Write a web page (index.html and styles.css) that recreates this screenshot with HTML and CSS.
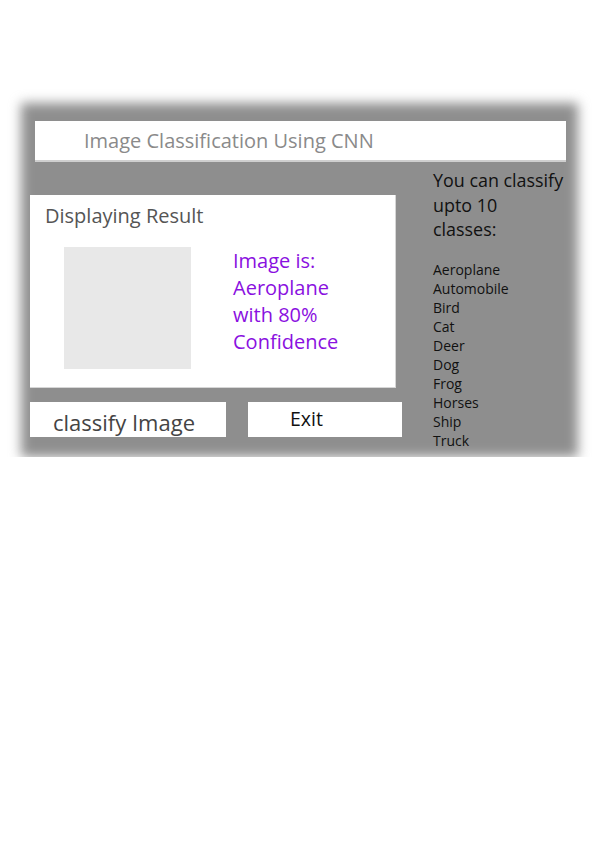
FILE: index.html
```html
<!DOCTYPE html>
<html>
<head>
<meta charset="utf-8">
<link rel="stylesheet" href="styles.css">
</head>
<body>
<div class="panel">
  <div class="header">Image Classification Using CNN</div>
  <div class="main">
    <div class="left">
      <div class="result">
        <div class="result-title">Displaying Result</div>
        <div class="result-body">
          <div class="thumb"></div>
          <div class="verdict">Image is:<br>Aeroplane<br>with 80%<br>Confidence</div>
        </div>
      </div>
      <div class="buttons">
        <div class="btn btn-classify">classify Image</div>
        <div class="btn btn-exit">Exit</div>
      </div>
    </div>
    <div class="right">
      <div class="intro">You can classify<br>upto 10<br>classes:</div>
      <ul class="classes">
        <li>Aeroplane</li>
        <li>Automobile</li>
        <li>Bird</li>
        <li>Cat</li>
        <li>Deer</li>
        <li>Dog</li>
        <li>Frog</li>
        <li>Horses</li>
        <li>Ship</li>
        <li>Truck</li>
      </ul>
    </div>
  </div>
</div>
</body>
</html>
```

FILE: styles.css
```css
html, body {
  margin: 0;
  padding: 0;
  background: #ffffff;
}
body {
  font-family: "Open Sans", "Liberation Sans", sans-serif;
  padding-top: 103px;
}
.panel {
  position: relative;
  margin-left: 21px;
  width: 557px;
  height: 354px;
  box-sizing: border-box;
  padding-top: 18px;
  isolation: isolate;
}
.panel::before {
  content: "";
  position: absolute;
  inset: 0;
  background: #8e8e8e;
  filter: blur(6px);
  z-index: -1;
}
.header {
  margin: 0 12px 0 14px;
  height: 39px;
  background: #fff;
  border-bottom: 2px solid #cfcfcf;
  color: #8a8a8a;
  font-size: 20px;
  line-height: 39px;
  padding-left: 49px;
}
.main {
  display: flex;
  padding-left: 9px;
}
.left {
  width: 372px;
  padding-top: 33px;
}
.result {
  width: 365px;
  height: 192px;
  background: #fff;
  border-right: 1px solid #d6d6d6;
  border-bottom: 1px solid #d6d6d6;
}
.result-title {
  padding: 7px 0 0 15px;
  font-size: 20px;
  line-height: 28px;
  color: #555;
}
.result-body {
  display: flex;
  padding: 17px 0 0 34px;
}
.thumb {
  width: 127px;
  height: 122px;
  background: #e8e8e8;
}
.verdict {
  margin-left: 42px;
  color: #8a10e0;
  font-size: 20px;
  line-height: 27px;
}
.buttons {
  display: flex;
  margin-top: 14px;
  gap: 22px;
}
.btn {
  height: 35px;
  background: #fff;
  box-sizing: border-box;
}
.btn-classify {
  width: 196px;
  font-size: 22px;
  color: #444;
  padding-left: 23px;
  line-height: 40px;
}
.btn-exit {
  width: 154px;
  font-size: 19.5px;
  color: #111;
  padding-left: 42px;
  line-height: 34px;
}
.right {
  margin-left: 31px;
  padding-top: 6px;
  color: #111;
}
.intro {
  font-size: 17.9px;
  line-height: 24.5px;
}
.classes {
  list-style: none;
  margin: 18px 0 0 0;
  padding: 0;
  font-size: 14px;
  line-height: 19px;
}
```
